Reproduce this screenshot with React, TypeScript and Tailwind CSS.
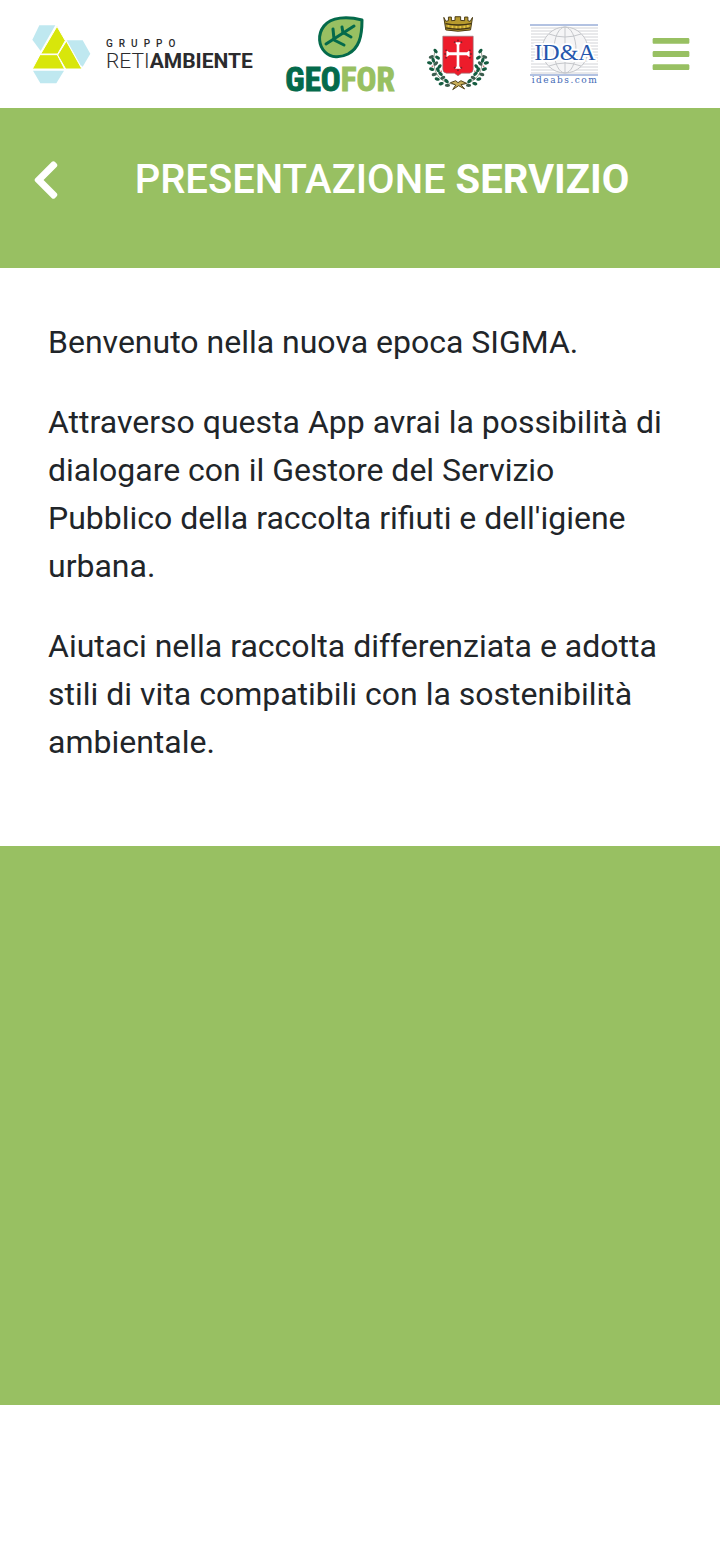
import React from 'react';
import { FaBars, FaChevronLeft } from 'react-icons/fa';

const paragraphs = [
  'Benvenuto nella nuova epoca SIGMA.',
  "Attraverso questa App avrai la possibilità di dialogare con il Gestore del Servizio Pubblico della raccolta rifiuti e dell'igiene urbana.",
  'Aiutaci nella raccolta differenziata e adotta stili di vita compatibili con la sostenibilità ambientale.',
];

const leaves = [
  [60, 138, 50], [47, 156, -20], [66, 158, 30], [42, 174, 10], [61, 176, -40], [48, 193, 20],
  [67, 195, 60], [56, 209, -10], [75, 207, 40], [65, 223, 15], [82, 219, -30], [77, 237, -15],
  [93, 229, 40], [96, 242, 0], [53, 166, 70], [72, 185, -50],
];

function RetiAmbienteLogo() {
  return (
    <div className="flex w-[221px] items-center gap-[15px] whitespace-nowrap text-[#2b2b2d]">
      <svg viewBox="36 44 177 177" className="size-[59px] shrink-0" aria-hidden="true">
        <g fill="#bfe8f0">
          <path d="M58 45H106L62 122L37 88Z" />
          <path d="M140 90H188L211 130L188 169L181 163Z" />
          <path d="M39 181H132L109 219H61Z" />
        </g>
        <g fill="#d8e60b" stroke="#fff" strokeWidth="3">
          <path d="M111 48L136 91L113 131H62Z" />
          <path d="M60 133H112L134 176H37Z" />
          <path d="M139 92L186 176H137L113 134Z" />
        </g>
      </svg>
      <div className="flex flex-col pt-[2px]">
        <span className="text-[10px] leading-[12px] font-medium tracking-[6px]">GRUPPO</span>
        <span className="text-[21px] leading-[22px] font-light">
          RETI<b className="font-bold">AMBIENTE</b>
        </span>
      </div>
    </div>
  );
}

function GeoforLogo() {
  return (
    <svg viewBox="0 -2 110 88" className="h-[88px] w-[110px] shrink-0 overflow-visible" role="img" aria-label="Geofor">
      <path
        d="M77 8C62 4 46 5 39 14C32 23 34 34 40 40C46 46 55 46 63 42C74 36 77 25 77 8Z"
        fill="#98c062"
        stroke="#046a4b"
        strokeWidth="3"
        strokeLinejoin="round"
      />
      <g fill="none" stroke="#046a4b" strokeWidth="3" strokeLinecap="round" strokeLinejoin="round">
        <path d="M41 32L69 14" />
        <path d="M48 17L49 27M57 15L58 21" />
        <path d="M49 28L59 33M59 21L66 25" />
      </g>
      <text
        x="55"
        y="79"
        textAnchor="middle"
        fontSize="33"
        fontWeight="700"
        fontFamily="'Liberation Sans Narrow', 'Roboto Condensed', Roboto, sans-serif"
        strokeWidth="1"
      >
        <tspan fill="#046a4b" stroke="#046a4b">GEO</tspan>
        <tspan fill="#98c062" stroke="#98c062">FOR</tspan>
      </text>
    </svg>
  );
}

function Laurel() {
  return (
    <g>
      <path d="M59 133C53 160 52 183 63 206C73 224 88 235 117 239" fill="none" stroke="#59664e" strokeWidth="2" />
      {leaves.map(([x, y, angle], i) => (
        <ellipse
          key={i}
          cx={x}
          cy={y}
          rx="8"
          ry="5"
          fill={i % 3 === 1 ? '#3c5d4e' : '#155c40'}
          transform={`rotate(${angle} ${x} ${y})`}
        />
      ))}
      <circle cx="50" cy="184" r="2" fill="#b52d2d" />
      <circle cx="77" cy="199" r="2" fill="#b52d2d" />
    </g>
  );
}

function CityCrest() {
  return (
    <svg viewBox="34 30 188 234" className="h-[78px] w-[62px] shrink-0" role="img" aria-label="Stemma">
      <path
        d="M85 36L91 48L99 46V35H108V46L119 45V34H136V45L148 46V35H158V46L165 48L172 36L166 74Q128 82 91 74Z"
        fill="#b79a2e"
        stroke="#4b3d16"
        strokeWidth="3"
      />
      <path d="M90 55Q128 63 168 55M92 68Q128 76 165 68" fill="none" stroke="#3d3215" strokeWidth="4" />
      <path d="M99 59v7M111 61v7M123 62v7M135 62v7M147 61v7M158 59v7" stroke="#e6c742" strokeWidth="5" />
      <path d="M82 93H174V193Q174 204 163 205H139L128 213L117 205H93Q82 204 82 193Z" fill="#ed1c2b" stroke="#8f777a" strokeWidth="2" />
      <path
        d="M118 111H138L132 119V142H155L163 136V157L155 151H132V184L138 192H118L124 184V151H101L93 157V136L101 142H124V119Z"
        fill="#fff"
      />
      <g fill="#7d202a">
        <circle cx="118" cy="111" r="3" />
        <circle cx="128" cy="106" r="3" />
        <circle cx="138" cy="111" r="3" />
        <circle cx="92" cy="136" r="3" />
        <circle cx="89" cy="147" r="3" />
        <circle cx="92" cy="158" r="3" />
        <circle cx="164" cy="136" r="3" />
        <circle cx="167" cy="147" r="3" />
        <circle cx="164" cy="158" r="3" />
        <circle cx="118" cy="189" r="3" />
        <circle cx="128" cy="196" r="3" />
        <circle cx="138" cy="189" r="3" />
      </g>
      <Laurel />
      <g transform="translate(256 0) scale(-1 1)">
        <Laurel />
      </g>
      <path d="M105 234L121 228L128 234L137 228L154 236L137 240L148 253L130 243L112 255L121 241Z" fill="#c8ad58" stroke="#51441d" strokeWidth="3" />
    </svg>
  );
}

function IdeaLogo() {
  return (
    <svg viewBox="0 -4 86 68" className="h-[68px] w-[86px] shrink-0" role="img" aria-label="ID&A ideabs.com">
      <path
        d="M10 4H77M10 7H77M10 10H77M10 13H77M10 16H77M10 19H77M10 22H77M10 25H77M10 28H77M10 31H77M10 34H77M10 37H77M10 40H77M10 43H77M10 46H77M10 49H77"
        stroke="#d2d3d7"
        strokeWidth="1"
      />
      <g fill="none" stroke="#c5c7cb" strokeWidth="1">
        <circle cx="44" cy="26" r="23" fill="#f5f5f6" />
        <ellipse cx="44" cy="26" rx="11" ry="23" />
        <path d="M44 3V49M28 10Q44 16 60 10M28 42Q44 36 60 42" />
      </g>
      <path d="M9 1H77M9 51H77" stroke="#6685c4" strokeWidth="1" />
      <g textAnchor="middle" fontSize="24" fontFamily="'Liberation Serif', serif">
        <text
          x="44"
          y="36"
          fill="#2456ad"
          stroke="#fff"
          strokeWidth="4"
          strokeLinejoin="round"
          paintOrder="stroke"
        >
          ID&amp;A
        </text>
      </g>
      <text x="44" y="59" textAnchor="middle" fontSize="9" letterSpacing="1.5" fill="#4269b5" fontFamily="'DejaVu Serif', serif">
        ideabs.com
      </text>
    </svg>
  );
}

export default function App() {
  return (
    <div className="min-h-screen bg-white font-[Roboto,sans-serif] text-[#212529]">
      <header className="flex h-[108px] items-center justify-between pr-7 pl-8">
        <div className="flex items-center gap-8">
          <RetiAmbienteLogo />
          <GeoforLogo />
          <CityCrest />
          <IdeaLogo />
        </div>
        <button type="button" aria-label="Menu" className="text-[#98c062]">
          <FaBars size={42} />
        </button>
      </header>

      <section className="flex h-40 items-start bg-[#98c062] pt-10 pr-6 pl-6 text-white">
        <button type="button" aria-label="Indietro" className="flex h-16 items-center">
          <FaChevronLeft size={44} />
        </button>
        <h1 className="flex-1 text-center text-[40px] leading-[64px] font-medium">
          PRESENTAZIONE <b className="font-bold">SERVIZIO</b>
        </h1>
      </section>

      <main className="flex flex-col gap-8 px-12 pt-[50px] pb-20 text-[32px] leading-[48px]">
        {paragraphs.map((text) => (
          <p key={text}>{text}</p>
        ))}
      </main>

      <div className="h-[559px] bg-[#98c062]" />
    </div>
  );
}
